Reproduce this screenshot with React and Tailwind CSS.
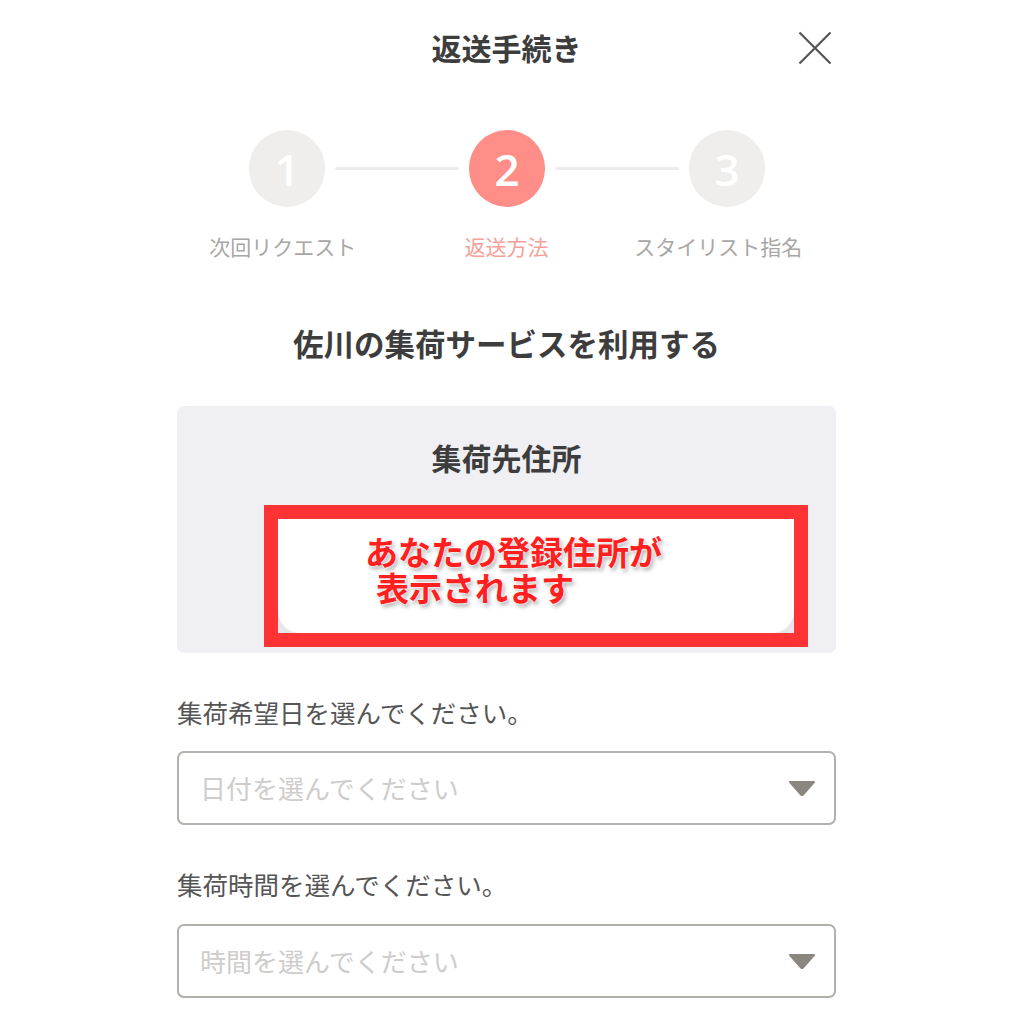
import React from "react";

const jp = { fontFamily: '"Noto Sans CJK JP", "Noto Sans", sans-serif' };

function Step({ n, active }) {
  return (
    <div
      className={`w-[76px] h-[77px] rounded-full flex items-center justify-center shrink-0 ${active ? "bg-[#ff8e88]" : "bg-[#efeeec]"}`}
    >
      <span className="text-white text-[44px] leading-none font-semibold" style={{ fontFamily: '"Open Sans", "Noto Sans", sans-serif' }}>
        {n}
      </span>
    </div>
  );
}

function Caret() {
  return (
    <svg width="28" height="16" viewBox="0 0 28 16">
      <path d="M2 2 L26 2 L15 14.5 Q14 15.5 13 14.5 Z" fill="#8b8680" stroke="#8b8680" strokeWidth="2" strokeLinejoin="round" />
    </svg>
  );
}

function SelectBox({ placeholder }) {
  return (
    <div className="h-[74px] border-2 border-[#b3afab] rounded-[7px] flex items-center justify-between pl-[21px] pr-[18px] bg-white">
      <span className="text-[26px] leading-none text-[#cfcdcb]">{placeholder}</span>
      <Caret />
    </div>
  );
}

export default function App() {
  return (
    <div className="w-[1024px] h-[1024px] bg-white overflow-hidden" style={jp}>
      <div className="ml-[177px] w-[659px] flex flex-col">
        {/* Header */}
        <div className="mt-[26px] grid grid-cols-[1fr_auto_1fr] items-center h-[42px]">
          <div />
          <div className="text-[30px] leading-[42px] font-bold text-[#3d3d3d]">返送手続き</div>
          <div className="justify-self-end mr-[4px] mt-[2px]">
            <svg width="34" height="34" viewBox="0 0 34 34">
              <path d="M1.5 1.5 L32.5 32.5 M32.5 1.5 L1.5 32.5" stroke="#555" strokeWidth="2.2" />
            </svg>
          </div>
        </div>

        {/* Steps */}
        <div className="mt-[62px] flex items-center pl-[72px] pr-[71px]">
          <Step n="1" />
          <div className="flex-1 mx-[10px] h-[3px] bg-[#ececf0] rounded" />
          <Step n="2" active />
          <div className="flex-1 mx-[10px] h-[3px] bg-[#ececf0] rounded" />
          <Step n="3" />
        </div>
        <div className="mt-[24px] grid grid-cols-3 text-[21px] leading-[30px]">
          <div className="text-center text-[#a9a7a5] pr-[8px]">次回リクエスト</div>
          <div className="text-center text-[#f7a09b]">返送方法</div>
          <div className="text-center text-[#a9a7a5] pr-[16px]">スタイリスト指名</div>
        </div>

        {/* Heading */}
        <div className="mt-[62px] text-center text-[30.5px] leading-[40px] font-bold text-[#3d3d3d]">
          佐川の集荷サービスを利用する
        </div>

        {/* Address box */}
        <div className="mt-[43px] bg-[#efeff4] rounded-[7px] pt-[31px] pb-[6px] flex flex-col">
          <div className="text-center text-[30px] leading-[40px] font-bold text-[#3d3d3d]">集荷先住所</div>
          <div className="mt-[28px] ml-[87px] mr-[28px] border-[14px] border-[#ff3335] bg-[#e6e6eb] h-[142px]">
            <div className="h-full bg-white rounded-b-[22px] pt-[14px] pl-[87px] text-[33px] leading-[36px] font-bold text-[#ff1f1f] [text-shadow:0_0_2px_#fff,0_0_3px_#fff,2px_3px_4px_rgba(0,0,0,0.35)]">
              <div>あなたの登録住所が</div>
              <div className="pl-[11px]">表示されます</div>
            </div>
          </div>
        </div>

        {/* Date */}
        <div className="mt-[41px] text-[25.5px] leading-[36px] text-[#555]">集荷希望日を選んでください。</div>
        <div className="mt-[21px]">
          <SelectBox placeholder="日付を選んでください" />
        </div>

        {/* Time */}
        <div className="mt-[41px] text-[25.5px] leading-[36px] text-[#555]">集荷時間を選んでください。</div>
        <div className="mt-[22px]">
          <SelectBox placeholder="時間を選んでください" />
        </div>
      </div>
    </div>
  );
}
